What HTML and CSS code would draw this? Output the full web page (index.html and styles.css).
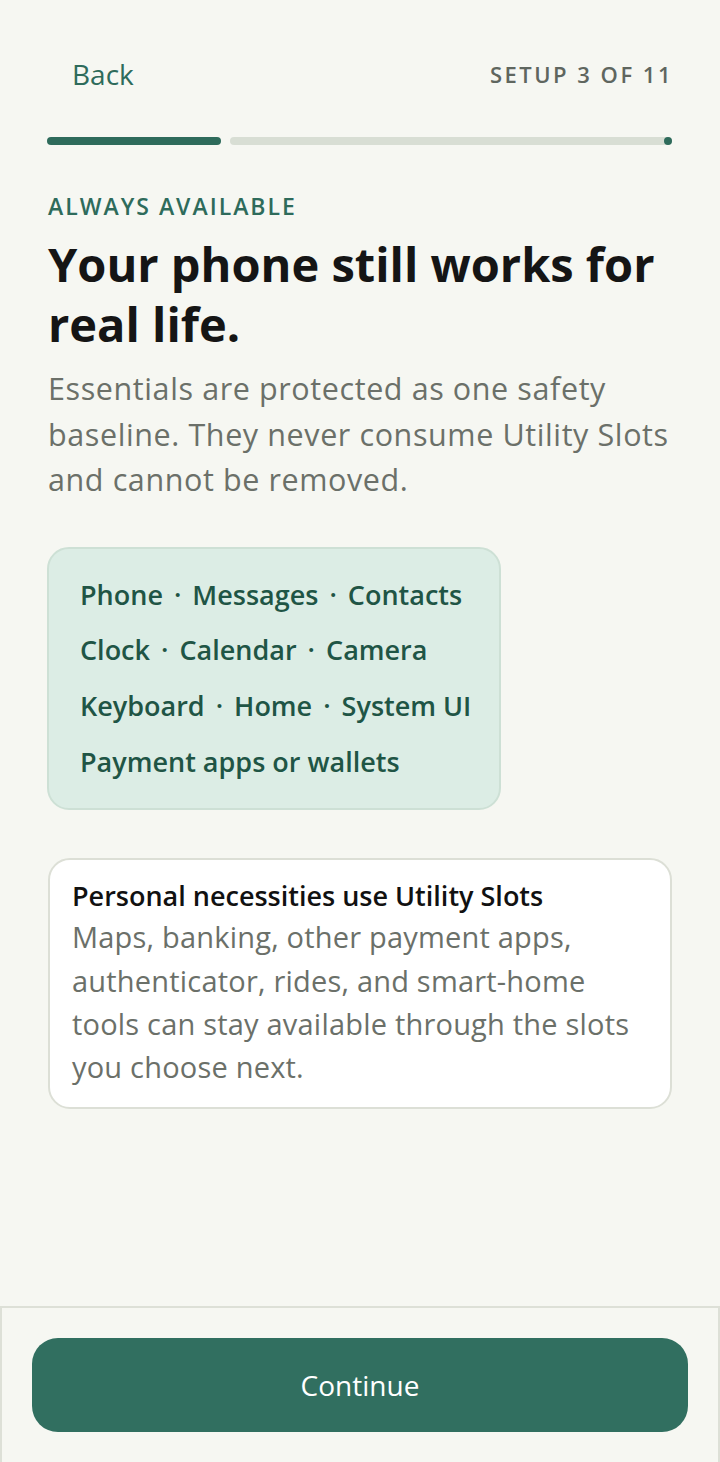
FILE: index.html
```html
<!DOCTYPE html>
<html lang="en">
<head>
<meta charset="utf-8">
<meta name="viewport" content="width=720">
<title>Setup 3 of 11</title>
<link rel="stylesheet" href="styles.css">
</head>
<body>
<div class="screen">
  <header class="topbar">
    <a class="back" href="#">Back</a>
    <span class="step">SETUP 3 OF 11</span>
  </header>
  <div class="progress" role="progressbar" aria-valuenow="3" aria-valuemin="1" aria-valuemax="11">
    <div class="track-active"></div>
    <div class="track-inactive"><span class="stop"></span></div>
  </div>
  <main class="content">
    <p class="eyebrow">ALWAYS AVAILABLE</p>
    <h1 class="title">Your phone still works for real life.</h1>
    <p class="lead">Essentials are protected as one safety baseline. They never consume Utility Slots and cannot be removed.</p>
    <div class="essentials">
      <p>Phone <span class="sep">·</span> Messages <span class="sep">·</span> Contacts</p>
      <p>Clock <span class="sep">·</span> Calendar <span class="sep">·</span> Camera</p>
      <p>Keyboard <span class="sep">·</span> Home <span class="sep">·</span> System UI</p>
      <p>Payment apps or wallets</p>
    </div>
    <section class="note">
      <h2>Personal necessities use Utility Slots</h2>
      <p>Maps, banking, other payment apps, authenticator, rides, and smart-home tools can stay available through the slots you choose next.</p>
    </section>
  </main>
  <footer class="bottom">
    <button class="continue" type="button">Continue</button>
  </footer>
</div>
</body>
</html>
```
FILE: styles.css
```css
* { box-sizing: border-box; }
html, body { margin: 0; padding: 0; }
body {
  background: #f6f7f2;
  font-family: "Open Sans", "Noto Sans", sans-serif;
  color: #151515;
}
.screen {
  width: 720px;
  height: 1462px;
  display: flex;
  flex-direction: column;
  overflow: hidden;
}
.topbar {
  display: flex;
  justify-content: space-between;
  align-items: center;
  height: 72px;
  margin-top: 38px;
  padding: 0 47px 0 48px;
}
.back {
  color: #2e6b5b;
  text-decoration: none;
  font-size: 28px;
  font-weight: 500;
  padding: 0 24px;
}
.step {
  color: #5f665f;
  font-size: 22px;
  font-weight: 600;
  letter-spacing: 2.5px;
}
.progress {
  display: flex;
  gap: 9px;
  margin: 27px 48px 0 47px;
  height: 8px;
}
.track-active {
  width: 174px;
  background: #2e6b5b;
  border-radius: 4px;
}
.track-inactive {
  flex: 1;
  background: #d8ded4;
  border-radius: 4px;
  display: flex;
  justify-content: flex-end;
  align-items: center;
}
.stop {
  width: 8px;
  height: 8px;
  border-radius: 50%;
  background: #2e6b5b;
}
.content {
  flex: 1;
  padding: 0 48px;
}
.eyebrow {
  margin: 47px 0 0;
  color: #2e6b5b;
  font-size: 23px;
  font-weight: 600;
  letter-spacing: 2px;
  line-height: 28px;
}
.title {
  margin: 14px 0 0;
  font-size: 47px;
  line-height: 60px;
  font-weight: 700;
  color: #151515;
}
.lead {
  margin: 12px -24px 0 0;
  font-size: 30.5px;
  line-height: 45.5px;
  letter-spacing: 0.6px;
  color: #6b7069;
}
.essentials {
  display: flex;
  flex-direction: column;
  margin-top: 44px;
  margin-left: -1px;
  padding: 18px 20px 19px 31px;
  width: 454px;
  background: #dcede5;
  border: 2px solid #cde0d5;
  border-radius: 22px;
}
.essentials p {
  margin: 0;
  color: #1f5545;
  font-size: 27px;
  font-weight: 600;
  line-height: 55.7px;
  white-space: nowrap;
}
.sep {
  margin: 0 4px;
}
.note {
  margin-top: 48px;
  padding: 19px 20px 18px 22px;
  background: #ffffff;
  border: 2px solid #dcdfd6;
  border-radius: 22px;
}
.note h2 {
  margin: 0;
  font-size: 27px;
  font-weight: 600;
  line-height: 34px;
  color: #111111;
}
.note p {
  margin: 2px 0 0;
  font-size: 29px;
  line-height: 43.3px;
  letter-spacing: 0.2px;
  color: #6b7069;
}
.bottom {
  height: 156px;
  border: 2px solid #dde0d7;
  border-bottom: none;
  padding: 30px 30px 0;
  background: #f6f7f2;
}
.continue {
  display: block;
  width: 100%;
  height: 94px;
  border: none;
  border-radius: 26px;
  background: #316f60;
  color: #ffffff;
  font-family: inherit;
  font-size: 28px;
  font-weight: 500;
}
```
